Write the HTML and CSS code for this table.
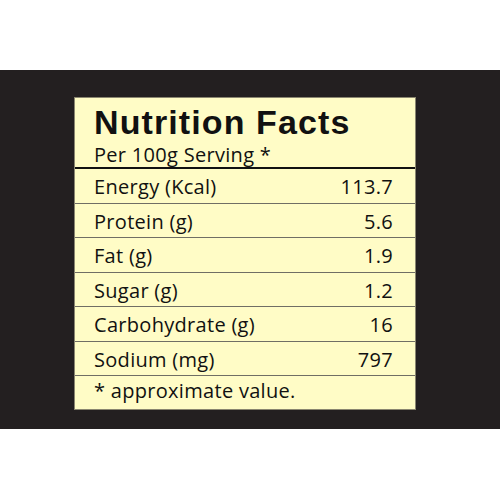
FILE: index.html
```html
<!DOCTYPE html>
<html lang="en">
<head>
    <meta charset="UTF-8">
    <meta name="viewport" content="width=device-width, initial-scale=1.0">
    <title>Nutrition Facts</title>
    <link rel="stylesheet" href="styles.css">
</head>
<body>
    <div id="band">
        <div id="label">
            <div class="label-head">
                <h1>Nutrition Facts</h1>
                <div class="serving">Per 100g Serving *</div>
            </div>
            <div class="row"><span>Energy (Kcal)</span><span>113.7</span></div>
            <div class="row"><span>Protein (g)</span><span>5.6</span></div>
            <div class="row"><span>Fat (g)</span><span>1.9</span></div>
            <div class="row"><span>Sugar (g)</span><span>1.2</span></div>
            <div class="row"><span>Carbohydrate (g)</span><span>16</span></div>
            <div class="row"><span>Sodium (mg)</span><span>797</span></div>
            <div class="note">* approximate value.</div>
        </div>
    </div>
</body>
</html>
```

FILE: styles.css
```css
body {
    margin: 0;
    background: #ffffff;
    font-family: "Open Sans", sans-serif;
    color: #111111;
}

#band {
    margin-top: 70px;
    height: 359px;
    box-sizing: border-box;
    padding: 27px 0 0 74px;
    background: #231f20;
}

#label {
    width: 342px;
    height: 313px;
    box-sizing: border-box;
    border: 1px solid #8a8670;
    background: #fffcc6;
    font-size: 20px;
    letter-spacing: 0.3px;
}

.label-head {
    box-sizing: border-box;
    height: 71px;
    padding: 4.7px 21px 0 19px;
    border-bottom: 2px solid #111111;
}

h1 {
    margin: 0;
    font-family: "Liberation Sans", Arial, sans-serif;
    font-weight: bold;
    font-size: 34px;
    line-height: 38px;
    letter-spacing: 1.1px;
}

.serving {
    line-height: 27.5px;
}

.row {
    display: flex;
    justify-content: space-between;
    padding: 3px 22px 0 19px;
    height: 30.5px;
    line-height: 30.5px;
    border-bottom: 1px solid #706e64;
}

.note {
    padding: 0 19px;
    line-height: 30px;
}
```
